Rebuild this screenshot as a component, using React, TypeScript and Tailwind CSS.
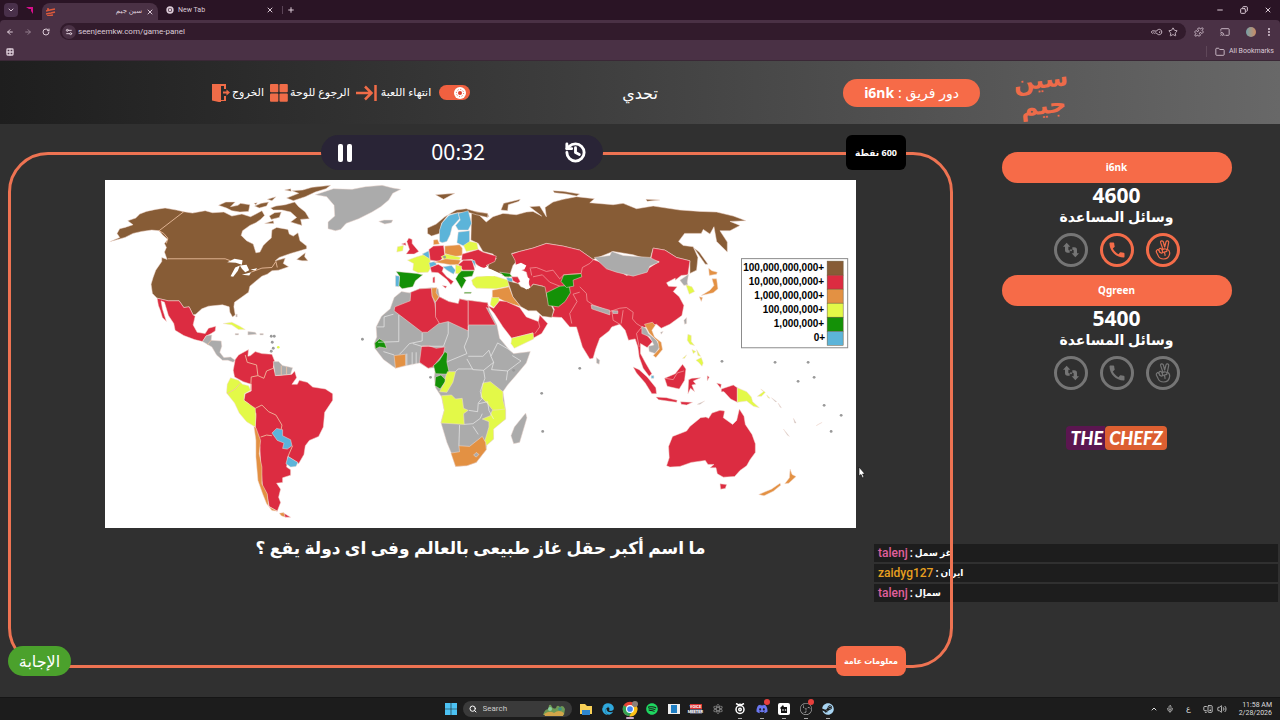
import type { ReactNode } from 'react'
import {
  ArrowLeft,
  ArrowRight,
  Cast,
  ChevronDown,
  ChevronUp,
  Copy,
  EllipsisVertical,
  Folder,
  Grid2x2,
  History,
  KeyRound,
  Mic,
  Minus,
  MonitorSpeaker,
  Plus,
  Puzzle,
  RotateCw,
  Search,
  Settings2,
  Star,
  Volume2,
  X,
} from 'lucide-react'
import { FaDiscord, FaEdge, FaSpotify, FaSteam } from 'react-icons/fa'
import { MdCall } from 'react-icons/md'
import { SiObsstudio } from 'react-icons/si'

const BROWN = '#875c36'
const RED = '#dc2c41'
const ORANGE = '#e39143'
const YELLOW = '#e3f948'
const GREEN = '#149107'
const BLUE = '#5cb4d9'
const GRAY = '#ababab'

type Shape = [fill: string, d: string]

const americas: Shape[] = [
  [BROWN, 'M14 185L44 172L36 160L44 146L60 142L84 134L68 122L92 114L104 102L124 94L152 88L180 84L214 90L236 95L262 99L300 92L322 98L356 96L380 108L410 102L436 110L452 102L470 92L478 106L466 118L452 128L434 136L412 152L408 166L424 182L444 192L452 218L464 216L474 196L486 184L498 174L500 150L514 142L548 148L552 162L564 168L578 158L584 182L604 198L604 206L584 212L556 220L522 232L510 242L540 234L534 250L550 260L520 270L500 272L486 282L470 288L448 306L434 318L430 336L408 352L388 366L386 380L390 404L382 410L374 396L372 380L352 374L330 376L310 378L290 386L272 402L264 404L252 380L236 382L222 362L190 362L156 354L142 340L138 312L144 292L152 270L170 244L170 232L186 238L178 216L184 202L178 190L188 178L172 164L162 152L140 150L110 154L84 160L60 172Z'],
  [BROWN, 'M340 76L362 66L390 66L376 80L398 76L406 70L434 74L430 94L404 96L380 92L364 84Z'],
  [BROWN, 'M496 84L512 78L540 74L568 66L580 80L600 96L612 116L586 118L590 136L570 130L556 126L574 112L556 96L530 90L504 90Z'],
  [BROWN, 'M544 54L580 40L560 32L592 30L620 22L676 16L662 26L630 36L600 50L564 62Z'],
  [BROWN, 'M448 78L468 70L490 66L484 78L462 84ZM486 58L512 50L500 62ZM538 30L556 26L558 34ZM508 98L528 96L522 112L498 118L492 108ZM478 130L504 122L506 130ZM446 70L456 68L452 74Z'],
  [BROWN, 'M574 238L600 218L598 230L608 242L590 242Z'],
  [RED, 'M156 354L190 362L222 362L236 382L252 380L264 404L270 408L264 434L276 456L300 460L310 444L332 438L330 452L318 460L302 468L292 484L268 478L236 466L210 450L206 430L190 406L178 366L168 362L172 386L184 424L172 412L166 392L160 376Z'],
  [GRAY, 'M292 484L304 466L320 464L318 480L348 482L350 498L344 516L356 532L376 530L390 540L384 546L368 540L352 540L334 524L320 500Z'],
  [YELLOW, 'M354 430L380 426L404 438L420 448L400 448L380 434Z'],
  [GRAY, 'M428 454L450 456L454 462L428 464ZM390 460h10v4h-10ZM464 460h10v4h-10ZM392 402h4v8h-4Z'],
  [RED, 'M390 538L400 524L430 508L428 528L436 526L450 514L470 520L500 522L508 542L504 560L512 586L560 582L568 572L574 592L560 612L576 612L582 600L606 606L622 620L660 626L682 640L682 660L658 696L654 740L640 768L612 780L600 796L596 822L580 850L576 846L548 828L544 860L556 868L556 884L532 892L532 906L514 908L526 926L520 950L526 966L516 992L492 978L484 940L472 920L466 850L464 800L450 740L452 700L430 670L416 660L420 640L438 632L438 612L414 604L388 590L384 570Z'],
  [YELLOW, 'M376 592L400 600L412 612L430 616L436 630L418 640L416 660L436 674L450 684L452 708L450 740L424 724L402 698L388 668L364 638L366 612Z'],
  [ORANGE, 'M446 738L452 742L466 780L462 820L470 860L470 910L486 940L490 978L516 992L500 990L484 970L472 940L458 900L452 830L452 780ZM522 998L536 996L540 1010L528 1006Z'],
  [RED, 'M536 998L556 1010L540 1010Z'],
  [BLUE, 'M500 758L514 744L532 748L532 766L556 778L560 796L546 806L532 804L536 788L516 780Z'],
  [BLUE, 'M548 828L578 846L572 858L556 860L542 850Z'],
  [GRAY, 'M504 544L520 544L532 556L562 562L556 582L510 586Z'],
  [GRAY, 'M630 44L684 26L740 28L780 20L830 16L862 24L886 28L862 40L850 60L826 80L800 96L760 116L722 130L706 148L690 152L668 146L668 126L688 108L686 76L664 50Z'],
]

const africa: Shape[] = [
  [GRAY, 'M126 334L150 338L180 326L220 322L236 326L240 350L268 364L296 370L300 356L326 360L384 368L390 392L412 434L420 474L450 510L462 520L512 514L500 548L470 584L444 614L430 634L438 690L438 716L400 746L402 776L382 794L380 808L350 846L322 856L288 858L276 820L262 786L244 726L254 690L246 650L228 622L224 590L228 562L206 564L180 548L142 556L108 564L72 538L46 504L44 490L52 470L50 440L66 408L92 386L104 352Z'],
  [RED, 'M154 336L180 326L216 324L218 348L226 370L230 404L240 428L204 456L188 456L104 392L106 380L152 362Z'],
  [ORANGE, 'M216 324L232 322L230 338L238 350L228 366L218 348Z'],
  [RED, 'M228 366L240 350L268 364L296 370L300 356L326 362L326 452L266 424L240 430L228 410Z'],
  [RED, 'M326 360L384 368L388 386L380 382L408 434L326 434Z'],
  [GREEN, 'M46 488L60 476L74 484L82 504L60 500L48 506Z'],
  [ORANGE, 'M104 526L138 522L138 556L108 564Z'],
  [RED, 'M186 498L206 496L230 504L256 500L252 520L236 540L220 560L206 564L180 546Z'],
  [GREEN, 'M256 514L264 520L262 545L270 582L228 580L222 556L240 540Z'],
  [GREEN, 'M228 590L244 584L260 600L242 626L226 616Z'],
  [YELLOW, 'M264 574L288 574L280 606L262 636L240 634L256 606L258 590Z'],
  [YELLOW, 'M246 646L276 644L288 656L308 654L312 684L326 690L312 700L314 732L244 728L254 690Z'],
  [YELLOW, 'M370 608L392 604L430 634L430 660L438 690L400 690L384 670L364 650Z'],
  [YELLOW, 'M398 690L438 686L438 716L402 746L402 776L380 796L376 780L388 740L388 724L368 716L392 706Z'],
  [ORANGE, 'M274 818L300 814L298 796L330 798L368 768L378 786L380 808L350 846L322 856L288 858Z'],
  [GRAY, 'M342 824L350 816L358 822L350 830Z'],
  [GRAY, 'M498 698L502 712L480 786L462 790L454 766L464 740Z'],
]

const eurasia: Shape[] = [
  [BROWN, 'M336 92L384 100L388 110L360 106L380 126L400 110L430 100L470 104L500 96L520 94L546 108L510 80L540 78L560 110L556 82L580 66L610 58L650 50L704 56L690 68L760 74L790 70L830 86L880 78L960 90L1020 94L1070 96L1120 108L1158 122L1110 124L1140 136L1110 152L1080 152L1102 186L1102 216L1070 184L1062 140L1050 162L1030 148L1024 160L974 160L956 184L970 196L1000 200L1014 232L1010 270L990 280L990 242L950 232L915 210L880 204L870 240L820 224L760 214L700 238L660 210L610 198L560 190L520 204L456 220L470 244L460 256L448 292L420 282L376 260L410 236L400 222L370 214L356 190L334 180Z'],
  [BROWN, 'M204 160L204 144L230 132L256 110L290 90L320 86L352 96L384 100L384 112L350 104L330 98L296 98L266 104L246 130L240 160L216 168Z'],
  [BROWN, 'M424 90L432 70L482 58L478 64L446 74L444 92ZM580 32L610 34L660 42L650 48L620 42L584 38ZM228 44L286 40L270 48L252 58ZM858 58L900 60L862 64ZM1002 204L1018 216L1044 252L1036 252Z'],
  [BLUE, 'M240 184L240 150L248 128L268 106L296 98L300 116L278 140L272 164L262 184L248 188Z'],
  [BLUE, 'M296 100L326 92L336 130L326 150L296 150L288 136L302 120Z'],
  [BLUE, 'M296 156L330 152L330 188L312 198L292 188Z'],
  [GRAY, 'M58 124L74 120L100 120L96 128L76 132Z'],
  [RED, 'M148 174L158 178L158 190L178 214L164 222L140 222L150 208L142 184ZM126 192L138 188L140 196Z'],
  [YELLOW, 'M114 200L132 196L130 212L112 216Z'],
  [ORANGE, 'M222 180L234 178L240 192L222 194Z'],
  [YELLOW, 'M144 240L172 230L200 222L212 236L212 266L206 276L176 278L160 270L162 250Z'],
  [GREEN, 'M110 274L172 280L190 284L168 302L160 320L128 326L118 316L120 288Z'],
  [BLUE, 'M108 286L120 288L118 320L108 318Z'],
  [BLUE, 'M188 222L208 212L210 236Z'],
  [RED, 'M208 208L222 198L252 196L256 226L240 244L212 240Z'],
  [ORANGE, 'M256 198L300 194L308 204L308 226L282 230L256 220Z'],
  [YELLOW, 'M312 196L330 184L352 188L356 208L320 214Z'],
  [YELLOW, 'M244 230L260 222L304 232L298 240L254 238Z'],
  [BLUE, 'M208 248L226 244L232 254L212 262Z'],
  [ORANGE, 'M224 246L258 236L304 240L296 254L272 254L250 250Z'],
  [RED, 'M308 222L356 208L370 216L410 228L406 244L380 256L388 262L366 264L350 252L338 238L306 240Z'],
  [RED, 'M296 254L312 240L338 240L346 270L310 270Z'],
  [BLUE, 'M336 240L346 242L348 262Z'],
  [RED, 'M212 262L236 252L252 262L248 274L262 290L282 304L274 314L262 298L236 278L216 276ZM220 292L226 290L226 308L220 308ZM248 316L262 318L258 324Z'],
  [BLUE, 'M250 260L276 256L288 270L282 282L262 270Z'],
  [YELLOW, 'M288 254L306 258L306 282L288 280Z'],
  [GREEN, 'M306 272L344 272L338 288L312 292L320 300L306 326L288 296L296 282ZM314 336L336 336L334 340L314 340Z'],
  [YELLOW, 'M336 300L350 290L400 286L446 300L448 318L410 326L350 324L340 314Z'],
  [GREEN, 'M420 276L450 280L458 290L436 290Z'],
  [BLUE, 'M440 292L460 294L458 308L446 306Z'],
  [RED, 'M456 290L474 290L482 304L474 310L460 302Z'],
  [ORANGE, 'M398 330L448 320L460 350L484 380L440 366L420 356L398 360Z'],
  [YELLOW, 'M396 352L418 352L418 364L402 382L392 374Z'],
  [RED, 'M384 376L402 384L420 362L440 364L480 382L500 410L536 424L540 404L564 430L546 460L520 474L520 458L456 474L430 440L404 400Z'],
  [YELLOW, 'M456 474L520 458L522 476L464 504L454 490Z'],
  [RED, 'M456 222L480 214L520 204L560 190L610 198L660 210L700 238L760 260L800 286L860 268L898 244L872 240L880 204L915 210L950 232L990 242L984 284L964 286L946 300L946 294L920 308L926 318L952 320L940 334L958 350L972 376L966 406L930 432L904 444L890 432L846 444L862 466L878 484L862 502L842 490L842 520L856 546L876 580L868 588L850 564L838 530L834 500L826 476L806 480L796 450L780 432L756 440L748 452L720 474L708 506L700 534L690 536L668 500L650 440L630 440L606 412L576 410L584 388L564 350L550 318L520 312L510 326L506 300L500 276L470 262L466 240Z'],
  [BROWN, 'M444 302L476 310L484 320L506 326L522 312L556 320L562 350L582 390L576 412L548 408L530 392L506 392L484 380L460 350Z'],
  [GREEN, 'M560 338L600 318L628 316L632 338L616 364L596 380L566 376Z'],
  [GREEN, 'M612 284L664 280L666 290L640 300L642 318L620 322L604 304Z'],
  [GRAY, 'M704 232L750 226L756 214L790 226L870 232L898 246L870 258L862 276L820 288L770 276L740 266Z'],
]

// far east and oceania
const pacific: Shape[] = [
  [GRAY, 'M94 374L150 390L150 404L96 386ZM158 392L174 392L174 400L160 400Z'],
  [GRAY, 'M246 438L258 444L266 460L290 480L300 500L286 520L268 514L266 498L282 494L270 470L246 460Z'],
  [ORANGE, 'M254 432L278 426L286 436L276 450L284 470L304 486L308 508L288 532L280 526L298 506L294 484L268 458Z'],
  [GRAY, 'M360 300L386 282L382 306L384 314L372 316ZM372 420L380 412L380 430L374 432ZM302 456L310 454L304 462ZM110 532L120 540L118 552L110 548Z'],
  [YELLOW, 'M378 314L396 320L404 334L388 342Z'],
  [ORANGE, 'M446 264L456 272L472 276L470 282L448 286ZM456 296L470 296L474 326L460 338L424 346L450 330L462 316ZM418 350L428 352L424 364Z'],
  [YELLOW, 'M384 462L394 466L394 484L404 496L390 492L382 480ZM396 508L408 514L400 520ZM410 508L422 528L414 526ZM408 540L424 532L430 548L426 558L416 546ZM368 534L380 524L374 534Z'],
  [RED, 'M220 560L238 568L262 590L288 622L290 640L276 640L256 608L230 578Z'],
  [RED, 'M288 650L320 652L352 660L350 666L296 658ZM362 664L398 666L380 674L364 672Z'],
  [RED, 'M314 594L346 580L368 552L378 566L374 600L358 626L322 618Z'],
  [RED, 'M386 598L396 594L422 592L400 602L408 612L396 614L404 634L392 624L384 640ZM442 586L448 590L442 602ZM470 608L484 612L482 624Z'],
  [RED, 'M484 626L520 614L532 622L532 666L512 656L492 634L484 634Z'],
  [YELLOW, 'M532 622L560 634L574 650L578 664L598 682L580 678L560 662L532 666Z'],
  [YELLOW, 'M592 648L610 634L602 626L616 636L604 648ZM620 644L630 654L624 652Z'],
  [RED, 'M338 768L380 752L390 738L422 712L438 710L446 714L456 698L480 690L494 692L490 712L518 732L530 720L538 686L552 708L556 732L576 762L586 790L586 816L570 838L560 856L540 870L524 888L490 890L472 880L468 862L450 862L462 852L444 852L436 840L394 846L360 858L330 860L320 856L328 832L326 798Z'],
  [RED, 'M480 910L500 912L496 924L482 926Z'],
  [ORANGE, 'M690 866L696 882L708 888L686 908L674 910L688 892ZM596 942L634 926L660 908L662 914L640 932L612 946Z'],
  [GRAY, 'M634 652L650 664L646 664ZM654 668L664 682L660 680ZM670 746L688 768L682 764ZM700 714L708 728L704 728ZM768 736L786 726L778 730ZM412 672L434 662L420 672Z'],
  [BLUE, 'M274 586h8v8h-8Z'],
]

const dots = [
  [257, 159], [169, 156], [167, 162], [168, 168], [166, 171], [325, 197], [339, 77], [408, 190], [436, 213],
  [437, 251], [474, 188], [616, 181], [669, 182], [702, 182], [692, 201], [708, 197], [718, 225], [735, 235], [725, 251], [166, 156],
]

const legend = [
  ['100,000,000,000+', BROWN],
  ['10,000,000,000+', RED],
  ['1,000,000,000+', ORANGE],
  ['100,000,000+', YELLOW],
  ['1,000,000+', GREEN],
  ['0+', BLUE],
]

function Shapes({ items }: { items: Shape[] }) {
  return (
    <>
      {items.map(([fill, d], i) => (
        <path key={i} d={d} fill={fill} stroke="#f3dcd4" strokeWidth="1.5" strokeLinejoin="round" />
      ))}
    </>
  )
}

function WorldMap() {
  return (
    <svg viewBox="0 0 750 347" className="w-4/5 bg-white" role="img">
      <g transform="scale(.33333)">
        <Shapes items={americas} />
        <g fill="#fff">
          <path d="M366 246L388 236L412 240L410 254L392 248Z" />
          <path d="M376 288L390 262L404 256L398 272L384 290Z" />
          <path d="M404 256L424 254L432 270L420 276L410 266ZM410 284L438 276L432 286ZM436 268L456 264L450 272Z" />
        </g>
        <g fill="none" stroke="#f0c3a4" strokeWidth="2.5">
          <path d="M236 95L162 152L176 160L188 174L184 190" />
          <path d="M188 236H360L376 242M438 276L470 264L500 262L512 244L516 262" />
          <path d="M420 524L426 546L454 554L458 586L438 590L436 630M458 586L476 594L484 572L504 564" />
          <path d="M450 684L470 674L490 694L512 704L530 734L528 746M466 770L484 764L500 766M562 796L548 828M366 640L390 626L406 608M318 480L306 494M528 556V584M544 560V582" />
        </g>
      </g>
      <g transform="translate(254 0) scale(.33333)">
        <Shapes items={africa} />
        <g fill="none" stroke="#eee" strokeWidth="2">
          <path d="M52 440H74V410L102 402M118 404V484L56 486M188 458V482L150 490L130 512L120 522M266 426V460L252 498L186 498M326 436V470L314 500L322 520L264 544" />
          <path d="M326 528L370 528L388 510L394 528L402 546L372 570L340 568L322 536M394 528L414 488L452 510M402 546L396 568L444 572L484 542L458 526M444 572L440 600M372 570L376 594L368 616L362 634L368 654L356 668L354 694L328 690" />
          <path d="M288 574L296 566L340 566M300 734L298 796M314 732L340 730L362 714L368 700M340 738L356 762M142 520V556M158 516V556M170 516V552M72 514L104 524M358 670L384 664L388 690L402 716M160 490L186 498" />
        </g>
        <Shapes items={eurasia} />
        <path d="M462 256L484 248L500 256L494 268L482 270L496 286L510 296L506 310L512 322L500 328L484 316L482 296L470 278Z" fill="#fff" />
        <path d="M346 268L358 258L374 264L388 254L384 264L396 268L430 284L400 288L360 286L344 290Z" fill="#fff" />
        <g fill="none" stroke="#f6a9a9" strokeWidth="2">
          <path d="M510 264L530 262L560 274L580 270L600 296L612 284L664 280M520 290L548 284L570 306L600 318M512 266L516 286M664 280L668 262L690 250L704 236" />
          <path d="M660 320L680 340L682 362L700 374L750 394L780 384L800 382L820 396L818 416L830 430L846 440M640 342L660 336M640 342L652 364L630 400L636 430M756 390L760 420L780 432M790 390L784 430M846 440L830 460L838 500M526 460L540 440L536 424" />
        </g>
      </g>
      <g transform="translate(454 0) scale(.33333)">
        <Shapes items={pacific} />
        <path d="M316 594L340 598L352 578L372 572" fill="none" stroke="#f6a9a9" strokeWidth="2" />
      </g>
      {dots.map(([cx, cy], i) => (
        <circle key={i} cx={cx} cy={cy} r="1.4" fill="#999" />
      ))}
      <circle cx="173" cy="167" r="1.3" fill={YELLOW} />

      <rect x="635.5" y="78.5" width="106" height="89" fill="#fff" stroke="#8c8c8c" />
      {legend.map(([label, fill], i) => (
        <g key={label}>
          <rect x="721" y={81 + i * 14} width="16" height="14" fill={fill} stroke="#6b5a3c" strokeWidth=".5" />
          <text
            x={i === 5 ? 719 : 718}
            y={91 + i * 14}
            textAnchor="end"
            className="fill-black font-['Liberation_Sans',sans-serif] text-[10px] font-bold"
          >
            {label}
          </text>
        </g>
      ))}
    </svg>
  )
}

function SwapArrows() {
  return (
    <svg viewBox="0 0 24 24" className="size-4" fill="currentColor">
      <path d="M5.500 1L11 7H8V11.500Q8 12.500 10 12.500V16H7Q3 16 3 12V7H0ZM18.500 23L13 17H16V12.500Q16 11.500 14 11.500V8H17Q21 8 21 12V17H24Z" />
      <circle cx="12" cy="12.500" r="1.500" />
    </svg>
  )
}

function VictoryHand() {
  return (
    <svg viewBox="0 0 24 30" className="h-5 w-4" fill="none" stroke="currentColor" strokeWidth="1.8" strokeLinecap="round" strokeLinejoin="round">
      <path d="M11.500 13L8.500 4Q8 1.500 10 1.200Q12 1 12.600 3L14.500 10.500L16.500 2.800Q17.200 1 19 1.400Q21 2 20.500 4L18.500 14" />
      <path d="M18.500 14Q22.500 16 22 20Q21 28.500 13 28.500Q6.500 28.500 4.500 23L2 18Q1.500 15.500 3.500 14.500Q5 14 6 16L7 18" />
      <path d="M6 15.500Q5.500 13 7.500 12.500Q9.500 12 10.500 14.500L11.500 18Q11 20 9 19.500L7 18M11.500 14.500Q13 12.500 16 13.500Q19 14.500 17.500 17L13 18.500Q15.500 20 15 23" />
    </svg>
  )
}

function Lifeline({ active, children, label }: { active: boolean; children: ReactNode; label: string }) {
  return (
    <button
      aria-label={label}
      className={
        active
          ? 'flex size-[34px] items-center justify-center rounded-full border-3 border-[#f46c49] text-[#f46c49]'
          : 'flex size-[34px] items-center justify-center rounded-full border-3 border-[#757575] text-[#757575]'
      }
    >
      {children}
    </button>
  )
}

function Team({ name, score, active }: { name: string; score: number; active: boolean }) {
  return (
    <section className="flex w-[230px] flex-col items-center">
      <h2 className="flex h-[31px] w-full items-center justify-center rounded-full bg-[#f66b48] text-[10px] font-bold">{name}</h2>
      <p className="text-[21px] leading-6 font-bold">{score}</p>
      <p dir="rtl" className="text-sm leading-5 font-bold">وسائل المساعدة</p>
      <div className="mt-1.5 flex gap-3">
        <Lifeline active={false} label="swap">
          <SwapArrows />
        </Lifeline>
        <Lifeline active={active} label="call">
          <MdCall className="size-5" />
        </Lifeline>
        <Lifeline active={active} label="double">
          <VictoryHand />
        </Lifeline>
      </div>
    </section>
  )
}

function BrowserChrome() {
  return (
    <div className="bg-[#2a1425] font-['Roboto','DejaVu_Sans',sans-serif] text-[#dccbd7]">
      <div className="flex h-5 items-center">
        <button aria-label="tabs" className="ml-1 flex size-3.5 items-center justify-center rounded bg-[#49304a]">
          <ChevronDown className="size-2" strokeWidth={3} />
        </button>
        <svg viewBox="0 0 8 8" className="ml-2 size-2">
          <path d="M0 1H7V8L5 5V3H3Z" fill="#d80f8c" />
        </svg>
        <div className="ml-2 flex h-[17px] w-[116px] items-center gap-1 self-end rounded-t-lg bg-[#4a3145] px-1 text-[7px]">
          <svg viewBox="0 0 10 8" className="h-2 w-2.5" stroke="#dc5a3c" strokeWidth="1.500" fill="none">
            <path d="M0 3L4 2L9 1M1 1L3 1M0 6L5 5L9 4M1 8L7 7" />
          </svg>
          <span dir="rtl" className="flex-1">سين جيم</span>
          <X className="size-2" strokeWidth={3} />
        </div>
        <div className="flex w-[120px] items-center gap-1 pr-1 pl-2 text-[7px]">
          <ChromeIcon mono />
          <span className="flex-1">New Tab</span>
          <X className="size-2" strokeWidth={3} />
        </div>
        <button aria-label="new tab" className="ml-1 border-l border-[#5b4457] pl-1">
          <Plus className="size-2" strokeWidth={3} />
        </button>
        <div className="ml-auto flex items-center gap-4 pr-2">
          <Minus className="size-2" strokeWidth={3} />
          <Copy className="size-2 -scale-x-100" strokeWidth={3} />
          <X className="size-2" strokeWidth={3} />
        </div>
      </div>

      <div className="rounded-t bg-[#4a3145]">
        <div className="flex h-[23px] items-center">
          <div className="flex items-center gap-2.5 pl-1.5">
            <ArrowLeft className="size-2" strokeWidth={3} />
            <ArrowRight className="size-2 opacity-50" strokeWidth={3} />
            <RotateCw className="size-2" strokeWidth={3} />
          </div>
          <div className="ml-2.5 flex h-[17px] flex-1 items-center gap-0.5 rounded-full bg-[#321b2c] pr-2 pl-0.5">
            <span className="flex size-3.5 items-center justify-center rounded-full bg-[#4a3145]">
              <Settings2 className="size-2" strokeWidth={3} />
            </span>
            <input
              aria-label="address"
              defaultValue="seenjeemkw.com/game-panel"
              className="min-w-0 flex-1 bg-transparent text-[8px] outline-none"
            />
            <KeyRound className="size-2.5 rotate-45" />
            <Star className="ml-1 size-2.5" />
          </div>
          <div className="flex items-center gap-4 pr-1.5 pl-2">
            <Puzzle className="size-2.5" />
            <Cast className="size-2.5" />
            <span className="size-2.5 rounded-full bg-linear-to-r from-[#73a0a8] to-[#c98a62]" />
            <EllipsisVertical className="-ml-2 size-2.5" strokeWidth={3} />
          </div>
        </div>
        <div className="flex h-[18px] items-center justify-between border-b border-[#3a2836] px-1.5 text-[7px]">
          <Grid2x2 className="size-2" strokeWidth={4} />
          <a href="#" className="flex items-center gap-1 border-l border-[#5f4759] pl-2">
            <Folder className="size-2.5" />
            All Bookmarks
          </a>
        </div>
      </div>
    </div>
  )
}

function ChromeIcon({ mono = false }: { mono?: boolean }) {
  return (
    <svg viewBox="0 0 24 24" className={mono ? 'size-2' : 'size-4'}>
      <circle cx="12" cy="12" r="11" fill={mono ? '#dccbd7' : '#e94335'} />
      {!mono && <path d="M12 12L2.500 6.500A11 11 0 0 0 11 23L17 14Z" fill="#34a353" />}
      {!mono && <path d="M12 7H22A11 11 0 0 1 11 23L16.500 14Z" fill="#fbc116" />}
      <circle cx="12" cy="12" r="6" fill={mono ? '#2a1425' : '#fff'} />
      <circle cx="12" cy="12" r="4.300" fill={mono ? '#dccbd7' : '#4285f4'} />
    </svg>
  )
}

function GameHeader() {
  return (
    <header className="grid h-[63px] grid-cols-[1fr_auto_1fr] items-center bg-linear-to-r from-[#1e1e1e] to-[#686868] px-[212px]">
      <nav className="flex items-center gap-1.5 text-[11px] whitespace-nowrap">
        <a href="#" className="flex items-center gap-0.5">
          <svg viewBox="0 0 18 18" className="size-[18px]" fill="#f06c48">
            <path d="M0 0H14V5H12V2H9V16H12V12H14V17H9V18.500L0 16.500Z" />
            <path d="M11 7.500H14.500V5.500L18 8.500L14.500 11.500V9.500H11Z" />
          </svg>
          <span dir="rtl">الخروج</span>
        </a>
        <a href="#" className="flex items-center gap-0.5">
          <svg viewBox="0 0 18 18" className="size-[18px]" fill="#f06c48">
            <rect width="8.300" height="8.300" rx="1" />
            <rect x="9.500" width="8.300" height="8.300" rx="1" />
            <rect y="9.500" width="8.300" height="8.300" rx="1" />
            <rect x="9.500" y="9.500" width="8.300" height="8.300" rx="1" />
          </svg>
          <span dir="rtl">الرجوع للوحة</span>
        </a>
        <a href="#" className="flex items-center gap-1">
          <svg viewBox="0 0 21 16" className="h-4 w-[21px]" fill="none" stroke="#f06c48" strokeWidth="2.500">
            <path d="M0 8H15M9 1.500L15.500 8L9 14.500M19.500 0V16" />
          </svg>
          <span dir="rtl">انتهاء اللعبة</span>
        </a>
        <label className="ml-0.5 flex h-[15px] w-[31px] items-center justify-end rounded-full bg-[#f06040] pr-1">
          <input type="checkbox" defaultChecked aria-label="theme" className="sr-only" />
          <svg viewBox="0 0 12 12" className="size-3">
            <circle cx="6" cy="6" r="6" fill="#fff" />
            <circle cx="6" cy="6" r="3.600" fill="none" stroke="#e0533a" strokeDasharray="1 1.800" />
            <circle cx="6" cy="6" r="2" fill="#e04030" />
          </svg>
        </label>
      </nav>
      <h1 dir="rtl" className="text-base">تحدي</h1>
      <div className="flex items-center justify-end gap-9">
        <p dir="rtl" className="flex h-7 w-[137px] items-center justify-center gap-1 rounded-full bg-[#f66b48] text-sm whitespace-nowrap">
          دور فريق : <b>i6nk</b>
        </p>
        <a
          href="#"
          dir="rtl"
          className="flex w-[52px] -rotate-6 flex-col items-center font-['DejaVu_Sans',sans-serif] text-2xl leading-[26px] font-bold text-[#ee6b49]"
        >
          <span>سين</span>
          <span>جيم</span>
        </a>
      </div>
    </header>
  )
}

function Board() {
  return (
    <section className="relative z-10 flex flex-1 flex-col items-center rounded-[40px] border-3 border-[#ee7352] pt-[25px]">
      <div className="absolute -top-5 left-[33%] flex h-[35px] w-[30%] items-center justify-between rounded-full bg-[#292436] px-4">
        <button aria-label="pause">
          <svg viewBox="0 0 16 18" className="h-[18px] w-4" fill="#fff">
            <rect x="1" width="5" height="18" rx="2" />
            <rect x="10" width="5" height="18" rx="2" />
          </svg>
        </button>
        <time className="text-[21px]">00:32</time>
        <button aria-label="restart">
          <History className="size-[23px]" strokeWidth={3} />
        </button>
      </div>
      <p
        dir="rtl"
        className="absolute -top-5 right-11 flex h-[35px] w-[60px] items-center justify-center rounded-md bg-black text-[9px] font-bold"
      >
        600 نقطة
      </p>

      <WorldMap />
      <h2 dir="rtl" className="mt-1.5 text-[17px] leading-7 font-bold">
        ما اسم أكبر حقل غاز طبيعى بالعالم وفى اى دولة يقع ؟
      </h2>

      <button className="absolute -bottom-[11px] -left-[3px] h-[30px] w-[63px] rounded-full bg-[#4ba12c] text-base leading-none">
        الإجابة
      </button>
      <p
        dir="rtl"
        className="absolute right-11 -bottom-[11px] flex h-[30px] w-[70px] items-center justify-center rounded-lg bg-[#f66b48] text-[8px] font-bold"
      >
        معلومات عامة
      </p>
    </section>
  )
}

const messages = [
  { user: 'talenj', text: 'غز سمل', color: 'text-[#e0609c]' },
  { user: 'zaidyg127', text: 'ايران', color: 'text-[#e8a020]' },
  { user: 'talenj', text: 'سمإل', color: 'text-[#e0609c]' },
]

function Chat() {
  return (
    <ul className="absolute right-0.5 bottom-[118px] flex w-[404px] flex-col gap-0.5 font-['Roboto','DejaVu_Sans',sans-serif] text-xs font-medium">
      {messages.map((m, i) => (
        <li key={i} className="flex h-[18px] items-center gap-0.5 bg-[#1d1d1d] px-1 leading-none">
          <span className={m.color}>{m.user}</span>
          <span>:</span>
          <span dir="rtl" className="text-[9px] font-bold">{m.text}</span>
        </li>
      ))}
    </ul>
  )
}

function Taskbar() {
  return (
    <footer className="grid h-[23px] grid-cols-[1fr_auto_1fr] items-center border-t border-[#151515] bg-[#1c1c1c] font-['Roboto','DejaVu_Sans',sans-serif]">
      <span />
      <div className="flex items-center gap-1.5">
        <svg viewBox="0 0 12 12" className="size-3" fill="#4cc2f4">
          <path d="M0 0H5.700V5.700H0ZM6.300 0H12V5.700H6.300ZM0 6.300H5.700V12H0ZM6.300 6.300H12V12H6.300Z" />
        </svg>
        <label className="flex h-4 w-[109px] items-center gap-1.5 rounded-full bg-[#3a3a3a] px-1.5">
          <Search className="size-2" strokeWidth={3} />
          <input aria-label="Search" placeholder="Search" className="w-0 flex-1 bg-transparent text-[8px] outline-none placeholder:text-[#ccc]" />
          <svg viewBox="0 0 24 13" className="h-[13px] w-6">
            <path d="M1 12Q3 5 7 6Q6 1 9 2Q11 7 14 5Q15 1 18 4Q21 1 23 6L22 12Z" fill="#6f9a55" />
            <path d="M2 11Q8 7 12 10Q17 6 22 10L21 13H3Z" fill="#d2a54a" />
            <circle cx="8" cy="6" r="2" fill="#8ad0a0" />
            <circle cx="18" cy="6" r="1.800" fill="#3a8f88" />
          </svg>
        </label>
        <svg viewBox="0 0 16 16" className="size-4">
          <path d="M2 3H7L9 5H14V13H2Z" fill="#f8d057" />
          <path d="M4 9H12V14H4Z" fill="#2e86cf" />
        </svg>
        <span className="flex size-4 items-center justify-center"><FaEdge className="size-3 text-[#2fa8dc]" /></span>
        <span className="relative flex size-4 flex-col items-center">
          <ChromeIcon />
          <span className="absolute top-0 right-0 size-1.5 rounded-full bg-[#8b8078]" />
          <span className="absolute -bottom-0.5 h-0.5 w-2 rounded bg-[#c9a8c8]" />
        </span>
        <span className="flex size-4 items-center justify-center"><FaSpotify className="size-3 text-[#1ed760]" /></span>
        <svg viewBox="0 0 16 16" className="size-4">
          <rect x="2" y="3" width="12" height="10" fill="#eee" />
          <rect x="5" y="4" width="6" height="8" fill="#1f7fc4" />
        </svg>
        <span className="flex size-4 flex-col items-center justify-center text-[4px] leading-[5px] font-bold">
          <span className="w-3 bg-[#dc3030] text-center">VOICE</span>
          <span className="flex w-3 justify-center bg-[#55586a]">MEETER</span>
        </span>
        <svg viewBox="0 0 24 24" className="size-4" fill="none" stroke="#777" strokeWidth="1.500">
          <ellipse cx="12" cy="12" rx="2.500" ry="7" />
          <ellipse cx="12" cy="12" rx="2.500" ry="7" transform="rotate(60 12 12)" />
          <ellipse cx="12" cy="12" rx="2.500" ry="7" transform="rotate(120 12 12)" />
        </svg>
        <TaskIcon>
          <svg viewBox="0 0 24 24" className="size-3" fill="none" stroke="#fff" strokeWidth="3">
            <circle cx="12" cy="13" r="8" />
            <circle cx="12" cy="13" r="2.500" />
            <path d="M4 1L12 5L20 1M12 1V6" />
          </svg>
        </TaskIcon>
        <TaskIcon badge>
          <FaDiscord className="size-3 text-[#6a77f0]" />
        </TaskIcon>
        <TaskIcon>
          <svg viewBox="0 0 12 12" className="size-3">
            <rect width="12" height="12" rx="2" fill="#fff" />
            <path d="M2 5L5 2L6 4H9V10H3V6Z" fill="#111" />
            <circle cx="5" cy="7" r=".8" fill="#fff" />
            <circle cx="7.500" cy="7" r=".8" fill="#fff" />
          </svg>
        </TaskIcon>
        <TaskIcon badge>
          <SiObsstudio className="size-3 text-[#bbb]" />
        </TaskIcon>
        <TaskIcon>
          <FaSteam className="size-3 text-[#a8d4f2]" />
        </TaskIcon>
      </div>
      <div className="flex items-center justify-end gap-2 pr-2 text-[#ddd]">
        <ChevronUp className="size-2" strokeWidth={3} />
        <Mic className="mr-1 size-2" />
        <span className="text-[8px]">ع</span>
        <span className="mr-1 ml-1 flex gap-1">
          <MonitorSpeaker className="size-2.5" />
          <Volume2 className="size-2.5" />
        </span>
        <p className="text-right text-[7px] leading-2">
          11:58 AM
          <br />
          2/28/2026
        </p>
      </div>
    </footer>
  )
}

function TaskIcon({ badge = false, children }: { badge?: boolean; children: ReactNode }) {
  return (
    <span className="relative flex size-4 items-center justify-center">
      {children}
      {badge && <span className="absolute -top-0.5 right-0 size-1.5 rounded-full bg-[#e8403c]" />}
      <span className="absolute -bottom-0.5 h-px w-1 bg-[#aaa]" />
    </span>
  )
}

export default function App() {
  return (
    <div className="relative flex min-h-screen flex-col bg-[#303030] font-['Noto_Sans','DejaVu_Sans',sans-serif] text-white">
      <BrowserChrome />
      <GameHeader />
      <main className="flex flex-1 pt-7 pb-[29px] pl-2">
        <Board />
        <aside className="flex w-[327px] flex-col items-center gap-2">
          <Team name="i6nk" score={4600} active />
          <Team name="Qgreen" score={5400} active={false} />
          <p className="mt-7 flex font-['Lato',sans-serif] text-lg leading-6 font-black italic">
            <span className="rounded-l bg-[#5b1650] pr-0.5 pl-1">THE</span>
            <span className="rounded bg-[#dc5f31] px-1">CHEFZ</span>
          </p>
        </aside>
      </main>
      <Chat />
      <Taskbar />
      <svg viewBox="0 0 8 12" className="absolute top-[467px] left-[858px] z-20 h-3 w-2">
        <path d="M1 0V9L3 7.500L4.500 11L6 10.300L4.600 7H7Z" fill="#fff" stroke="#111" strokeWidth=".7" />
      </svg>
    </div>
  )
}
